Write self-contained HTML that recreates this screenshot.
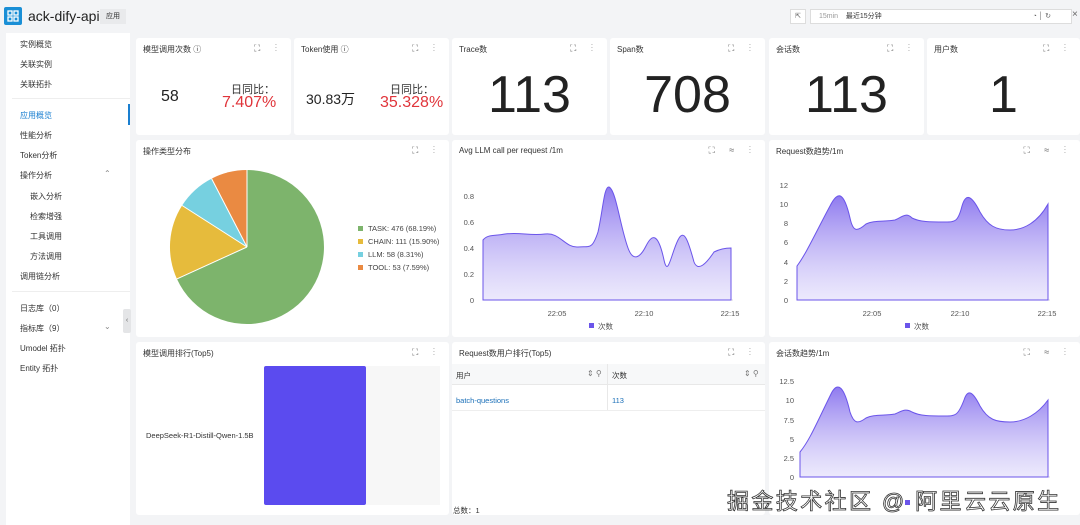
<!DOCTYPE html>
<html><head><meta charset="utf-8"><style>
*{margin:0;padding:0;box-sizing:border-box}
body{width:1080px;height:525px;overflow:hidden;background:#f3f4f6;font-family:"Liberation Sans","Noto Sans CJK SC",sans-serif;color:#333;position:relative}
.abs{position:absolute}
.card{position:absolute;background:#fff;border-radius:3px}
.t{position:absolute;left:7px;top:6px;font-size:8px;color:#333}
.ic{position:absolute;top:5px;right:8px;font-size:9px;color:#666;letter-spacing:6px}
.side div{position:absolute;font-size:8px;color:#333}
.big{position:absolute;font-size:52px;color:#222;width:100%;text-align:center;top:27px}
</style></head><body>
<!-- header -->
<div class="abs" style="left:4px;top:7px;width:18px;height:18px;background:#1a8fd6;border-radius:2px"></div>
<svg class="abs" style="left:4px;top:7px" width="18" height="18"><g fill="none" stroke="#fff" stroke-width="1.3"><rect x="4" y="4" width="4" height="4"/><rect x="10" y="4" width="4" height="4"/><rect x="4" y="10" width="4" height="4"/><rect x="10" y="10" width="4" height="4"/></g></svg>
<div class="abs" style="left:28px;top:8px;font-size:14px;color:#222">ack-dify-api</div>
<div class="abs" style="left:100px;top:9px;width:26px;height:15px;background:#e9eaec;font-size:7px;line-height:15px;text-align:center">应用</div>
<div class="abs" style="left:790px;top:9px;width:16px;height:15px;background:#fff;border:1px solid #ddd;font-size:7px;text-align:center;line-height:13px;color:#666">⇱</div>
<div class="abs" style="left:810px;top:9px;width:262px;height:15px;background:#fff;border:1px solid #ddd;font-size:7px;line-height:13px;color:#999;padding-left:8px">15min &nbsp;&nbsp;&nbsp;<span style="color:#333">最近15分钟</span><span style="position:absolute;right:20px;color:#666">◔ │ ↻</span></div>
<div class="abs" style="left:1072px;top:9px;font-size:10px;color:#666">×</div>
<!-- sidebar -->
<div class="abs side" style="left:6px;top:33px;width:124px;height:492px;background:#fff">
<div style="left:14px;top:6px">实例概览</div>
<div style="left:14px;top:26px">关联实例</div>
<div style="left:14px;top:46px">关联拓扑</div>
<div style="left:6px;top:65px;width:118px;height:1px;background:#eee"></div>
<div style="left:14px;top:77px;color:#1a7fd0">应用概览</div>
<div style="left:122px;top:71px;width:2px;height:21px;background:#1a7fd0"></div>
<div style="left:14px;top:97px">性能分析</div>
<div style="left:14px;top:117px">Token分析</div>
<div style="left:14px;top:137px">操作分析</div><div style="left:98px;top:136px;color:#888">⌃</div>
<div style="left:24px;top:158px">嵌入分析</div>
<div style="left:24px;top:178px">检索增强</div>
<div style="left:24px;top:198px">工具调用</div>
<div style="left:24px;top:218px">方法调用</div>
<div style="left:14px;top:238px">调用链分析</div>
<div style="left:6px;top:258px;width:118px;height:1px;background:#eee"></div>
<div style="left:14px;top:270px">日志库（0）</div>
<div style="left:14px;top:290px">指标库（9）</div><div style="left:98px;top:289px;color:#888">⌄</div>
<div style="left:14px;top:310px">Umodel 拓扑</div>
<div style="left:14px;top:330px">Entity 拓扑</div>
</div>
<div class="abs" style="left:123px;top:309px;width:8px;height:24px;background:#e4e5e7;border-radius:2px;font-size:7px;line-height:24px;text-align:center;color:#666">‹</div>
<!-- row1 -->
<div class="card" style="left:136px;top:38px;width:155px;height:97px"><div class="t">模型调用次数 ⓘ</div><div class="ic">⛶ ⋮</div>
<div class="abs" style="left:25px;top:50px;font-size:16px;color:#222">58</div>
<div class="abs" style="left:95px;top:43px;font-size:11px;color:#333">日同比：</div>
<div class="abs" style="left:86px;top:56px;font-size:16px;color:#e0343a">7.407%</div></div>
<div class="card" style="left:294px;top:38px;width:155px;height:97px"><div class="t">Token使用 ⓘ</div><div class="ic">⛶ ⋮</div>
<div class="abs" style="left:12px;top:51px;font-size:14px;color:#222">30.83万</div>
<div class="abs" style="left:96px;top:43px;font-size:11px;color:#333">日同比：</div>
<div class="abs" style="left:86px;top:56px;font-size:16px;color:#e0343a">35.328%</div></div>
<div class="card" style="left:452px;top:38px;width:155px;height:97px"><div class="t">Trace数</div><div class="ic">⛶ ⋮</div><div class="big">113</div></div>
<div class="card" style="left:610px;top:38px;width:155px;height:97px"><div class="t">Span数</div><div class="ic">⛶ ⋮</div><div class="big">708</div></div>
<div class="card" style="left:769px;top:38px;width:155px;height:97px"><div class="t">会话数</div><div class="ic">⛶ ⋮</div><div class="big">113</div></div>
<div class="card" style="left:927px;top:38px;width:153px;height:97px"><div class="t">用户数</div><div class="ic">⛶ ⋮</div><div class="big">1</div></div>
<!-- row2 -->
<div class="card" style="left:136px;top:140px;width:313px;height:197px"><div class="t">操作类型分布</div><div class="ic">⛶ ⋮</div>
<svg class="abs" style="left:0;top:0" width="313" height="197">
<g transform="translate(111,107)">
<path d="M0,0 L0,-77 A77,77 0 1 1 -70.1,31.9 Z" fill="#7db46c"/>
<path d="M0,0 L-70.1,31.9 A77,77 0 0 1 -64.9,-41.5 Z" fill="#e6bb3c"/>
<path d="M0,0 L-64.9,-41.5 A77,77 0 0 1 -35.4,-68.4 Z" fill="#76d0e0"/>
<path d="M0,0 L-35.4,-68.4 A77,77 0 0 1 0,-77 Z" fill="#ea8a42"/>
<g stroke="#fff" stroke-width="1"><line x1="0" y1="0" x2="0" y2="-77"/><line x1="0" y1="0" x2="-70.1" y2="31.9"/><line x1="0" y1="0" x2="-64.9" y2="-41.5"/><line x1="0" y1="0" x2="-35.4" y2="-68.4"/></g>
</g>
<g font-size="7.5" fill="#444"><rect x="222" y="86" width="5" height="5" fill="#7db46c"/><text x="232" y="91">TASK: 476 (68.19%)</text>
<rect x="222" y="99" width="5" height="5" fill="#e6bb3c"/><text x="232" y="104">CHAIN: 111 (15.90%)</text>
<rect x="222" y="112" width="5" height="5" fill="#76d0e0"/><text x="232" y="117">LLM: 58 (8.31%)</text>
<rect x="222" y="125" width="5" height="5" fill="#ea8a42"/><text x="232" y="130">TOOL: 53 (7.59%)</text></g></svg></div>
<div class="card" style="left:452px;top:140px;width:313px;height:197px"><div class="t">Avg LLM call per request /1m</div><div class="ic">⛶ ≈ ⋮</div></div>
<div class="card" style="left:769px;top:140px;width:311px;height:197px"><div class="t">Request数趋势/1m</div><div class="ic">⛶ ≈ ⋮</div></div>
<!-- row3 -->
<div class="card" style="left:136px;top:342px;width:313px;height:173px"><div class="t">模型调用排行(Top5)</div><div class="ic">⛶ ⋮</div>
<div class="abs" style="left:230px;top:24px;width:74px;height:139px;background:#f7f7f7"></div>
<div class="abs" style="left:128px;top:24px;width:102px;height:139px;background:#5b4bef;border-radius:2px"></div>
<div class="abs" style="left:10px;top:89px;font-size:7.5px;color:#333">DeepSeek-R1-Distill-Qwen-1.5B</div></div>
<div class="card" style="left:452px;top:342px;width:313px;height:173px"><div class="t">Request数用户排行(Top5)</div><div class="ic">⛶ ⋮</div>
<div class="abs" style="left:0;top:22px;width:313px;height:21px;background:#f7f8f9;border-bottom:1px solid #e8e8e8"></div>
<div class="abs" style="left:155px;top:22px;width:1px;height:46px;background:#e8e8e8"></div>
<div class="abs" style="left:4px;top:28px;font-size:7.5px">用户</div><div class="abs" style="left:135px;top:27px;font-size:8px;color:#777">⇕ ⚲</div>
<div class="abs" style="left:160px;top:28px;font-size:7.5px">次数</div><div class="abs" style="left:292px;top:27px;font-size:8px;color:#777">⇕ ⚲</div>
<div class="abs" style="left:4px;top:54px;font-size:7.5px;color:#1a6fb8">batch-questions</div>
<div class="abs" style="left:160px;top:54px;font-size:7.5px;color:#1a6fb8">113</div>
<div class="abs" style="left:0;top:68px;width:313px;height:1px;background:#eee"></div>
<div class="abs" style="left:1px;top:163px;font-size:7.5px">总数：1</div></div>
<div class="card" style="left:769px;top:342px;width:311px;height:173px"><div class="t">会话数趋势/1m</div><div class="ic">⛶ ≈ ⋮</div></div>
<!-- charts -->
<svg class="abs" style="left:0;top:0" width="1080" height="525">
<defs><linearGradient id="g" x1="0" y1="0" x2="0" y2="1"><stop offset="0" stop-color="#7b63ec" stop-opacity=".85"/><stop offset="1" stop-color="#c9c0f7" stop-opacity=".35"/></linearGradient></defs>
<g font-size="7.5" fill="#555" text-anchor="end">
<text x="474" y="199">0.8</text><text x="474" y="225">0.6</text><text x="474" y="251">0.4</text><text x="474" y="277">0.2</text><text x="474" y="303">0</text>
<text x="788" y="188">12</text><text x="788" y="207">10</text><text x="788" y="226">8</text><text x="788" y="245">6</text><text x="788" y="265">4</text><text x="788" y="284">2</text><text x="788" y="303">0</text>
<text x="794" y="384">12.5</text><text x="794" y="403">10</text><text x="794" y="423">7.5</text><text x="794" y="442">5</text><text x="794" y="461">2.5</text><text x="794" y="480">0</text>
</g>
<g font-size="7.5" fill="#555" text-anchor="middle"><text x="557" y="316">22:05</text><text x="644" y="316">22:10</text><text x="730" y="316">22:15</text>
<text x="872" y="316">22:05</text><text x="960" y="316">22:10</text><text x="1047" y="316">22:15</text></g>
<g font-size="7.5" fill="#555"><rect x="589" y="323" width="5" height="5" fill="#6b55ea"/><text x="598" y="329">次数</text>
<rect x="905" y="323" width="5" height="5" fill="#6b55ea"/><text x="914" y="329">次数</text>
<rect x="905" y="500" width="5" height="5" fill="#6b55ea"/></g>
<line x1="483" y1="300" x2="733" y2="300" stroke="#ddd"/>
<line x1="797" y1="300" x2="1050" y2="300" stroke="#ddd"/>
<line x1="800" y1="477" x2="1050" y2="477" stroke="#ddd"/>
<path d="M483,300 L483,240 C488,234 495,236 505,234 C520,232 530,236 545,234 C560,232 565,248 578,247 C590,246 592,250 598,232 C603,210 604,186 609,187 C616,190 620,226 628,248 C633,262 640,258 646,246 C652,234 658,232 664,260 C668,278 671,254 678,240 C684,228 688,240 694,262 C698,272 706,264 714,252 C722,248 728,248 731,248 L731,300 Z" fill="url(#g)" stroke="#6b55ea" stroke-width="1"/>
<path d="M797,300 L797,266 C806,254 815,234 830,206 C838,190 844,192 850,218 C853,232 857,232 866,224 C874,220 884,222 895,220 C902,217 906,212 912,218 C920,222 930,222 945,222 C955,222 958,222 962,206 C966,192 972,196 980,212 C988,226 996,230 1010,230 C1024,230 1038,222 1048,204 L1048,300 Z" fill="url(#g)" stroke="#6b55ea" stroke-width="1"/>
<path d="M800,477 L800,452 C810,440 818,420 832,392 C838,382 844,386 850,412 C854,424 858,424 866,418 C874,414 884,416 895,414 C902,411 906,408 912,412 C920,416 930,416 945,416 C955,416 958,416 964,400 C968,388 973,392 980,406 C988,420 996,422 1010,422 C1024,422 1038,414 1048,400 L1048,477 Z" fill="url(#g)" stroke="#6b55ea" stroke-width="1"/>
</svg>
<div class="abs" style="left:727px;top:484px;font-size:22px;color:#fff;-webkit-text-stroke:0.8px #333;white-space:nowrap;letter-spacing:2.4px">掘金技术社区 @ 阿里云云原生</div>
</body></html>
